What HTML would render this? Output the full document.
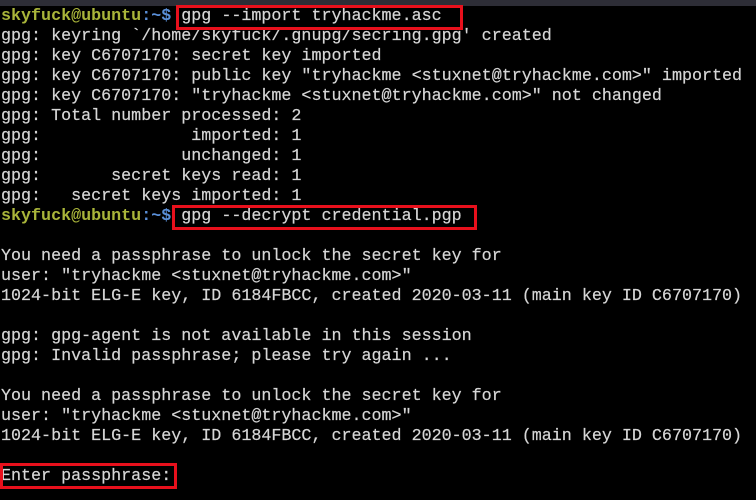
<!DOCTYPE html>
<html><head><meta charset="utf-8"><style>
html,body{margin:0;padding:0;background:#000;width:756px;height:500px;overflow:hidden}
.bar{position:absolute;left:0;top:0;width:756px;height:6px;background:#2d2d36}
pre{position:absolute;left:1px;top:7px;margin:0;font-family:"Liberation Mono",monospace;font-size:16.7px;line-height:20px;color:#d6d6d6;white-space:pre;-webkit-text-stroke:0.2px #d6d6d6}
.u{color:#a9b53a;font-weight:bold;-webkit-text-stroke:0}.p{color:#5a8fd8;font-weight:bold;-webkit-text-stroke:0}
.box{position:absolute;border:3px solid #e8101c;box-sizing:border-box}
</style></head><body>
<div class="bar"></div>
<pre><span class="u">skyfuck@ubuntu</span><span class="p">:~$</span> gpg --import tryhackme.asc
gpg: keyring `/home/skyfuck/.gnupg/secring.gpg' created
gpg: key C6707170: secret key imported
gpg: key C6707170: public key "tryhackme &lt;stuxnet@tryhackme.com&gt;" imported
gpg: key C6707170: "tryhackme &lt;stuxnet@tryhackme.com&gt;" not changed
gpg: Total number processed: 2
gpg:               imported: 1
gpg:              unchanged: 1
gpg:       secret keys read: 1
gpg:   secret keys imported: 1
<span class="u">skyfuck@ubuntu</span><span class="p">:~$</span> gpg --decrypt credential.pgp

You need a passphrase to unlock the secret key for
user: "tryhackme &lt;stuxnet@tryhackme.com&gt;"
1024-bit ELG-E key, ID 6184FBCC, created 2020-03-11 (main key ID C6707170)

gpg: gpg-agent is not available in this session
gpg: Invalid passphrase; please try again ...

You need a passphrase to unlock the secret key for
user: "tryhackme &lt;stuxnet@tryhackme.com&gt;"
1024-bit ELG-E key, ID 6184FBCC, created 2020-03-11 (main key ID C6707170)

Enter passphrase:</pre>
<div class="box" style="left:176px;top:5px;width:287px;height:25px"></div>
<div class="box" style="left:172px;top:205px;width:305px;height:25px"></div>
<div class="box" style="left:0;top:463px;width:177px;height:26px"></div>
</body></html>
